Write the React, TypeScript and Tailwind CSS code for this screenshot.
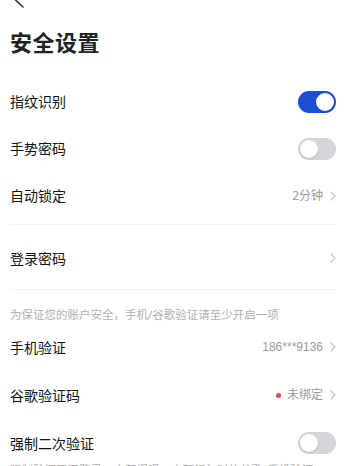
import React from 'react';

const Chevron = () => (
  <svg width="6" height="10" viewBox="0 0 6 10" fill="none" className="ml-[7px]">
    <path d="M1 1 L5 5 L1 9" stroke="#c8c8cc" strokeWidth="1.2" strokeLinecap="round" strokeLinejoin="round" />
  </svg>
);

const Toggle = ({ on }: { on: boolean }) => (
  <div
    className={`w-[38px] h-[22px] rounded-full p-[2px] flex ${on ? 'bg-[#1c4fd6] justify-end' : 'bg-[#d3d5db] justify-start'}`}
  >
    <div className="w-[18px] h-[18px] rounded-full bg-white shadow-[0_1px_2px_rgba(0,0,0,0.15)]" />
  </div>
);

const Row = ({ label, children, h = 'h-[47px]' }: { label: string; children?: React.ReactNode; h?: string }) => (
  <div className={`${h} flex items-center justify-between`}>
    <span className="text-[14px] font-normal text-[#111]">{label}</span>
    <div className="flex items-center">{children}</div>
  </div>
);

export default function App() {
  return (
    <div
      className="w-[354px] h-[466px] overflow-hidden bg-white"
      style={{ fontFamily: '"Noto Sans", "Noto Sans CJK SC", sans-serif' }}
    >
      {/* back */}
      <div className="h-[8px] relative">
        <svg width="30" height="8" viewBox="0 0 30 8" fill="none" className="block">
          <path d="M23 -7 L15.5 0 L23 7" stroke="#333" strokeWidth="1.6" strokeLinecap="round" />
        </svg>
      </div>

      <h1 className="mt-[19px] pl-[10px] text-[22px] leading-[30px] font-semibold text-[#222] tracking-[0.5px]">安全设置</h1>

      <div className="pl-[10px] pr-[18px] mt-[21px]">
        <div className="border-b border-[#f2f2f2] pb-[5px]">
          <Row label="指纹识别">
            <Toggle on />
          </Row>
          <Row label="手势密码">
            <Toggle on={false} />
          </Row>
          <Row label="自动锁定">
            <span className="text-[12px] text-[#9a9a9a]">2分钟</span>
            <Chevron />
          </Row>
        </div>

        <div className="border-b border-[#f2f2f2]">
          <Row label="登录密码" h="h-[64px] pt-[2px]">
            <Chevron />
          </Row>
        </div>

        <p className="pt-[17px] text-[11.5px] leading-[16px] text-[#b0b0b0]">为保证您的账户安全，手机/谷歌验证请至少开启一项</p>

        <Row label="手机验证" h="h-[48px]">
          <span className="text-[12px] text-[#9a9a9a]" style={{ fontFamily: '"Liberation Sans", sans-serif' }}>186***9136</span>
          <Chevron />
        </Row>
        <Row label="谷歌验证码" h="h-[48px]">
          <span className="w-[5px] h-[5px] rounded-full bg-[#e5484d] mr-[6px]" />
          <span className="text-[12px] text-[#9a9a9a]">未绑定</span>
          <Chevron />
        </Row>

        <div className="pt-[14px]">
          <div className="h-[20px] flex items-center justify-between">
            <span className="text-[14px] font-normal text-[#111]">强制二次验证</span>
            <Toggle on={false} />
          </div>
          <p className="mt-[9px] text-[11.5px] leading-[16px] text-[#b0b0b0] whitespace-nowrap">强制验证用于登录、小额提现、小额红包时的谷歌/手机验证</p>
        </div>
      </div>
    </div>
  );
}
